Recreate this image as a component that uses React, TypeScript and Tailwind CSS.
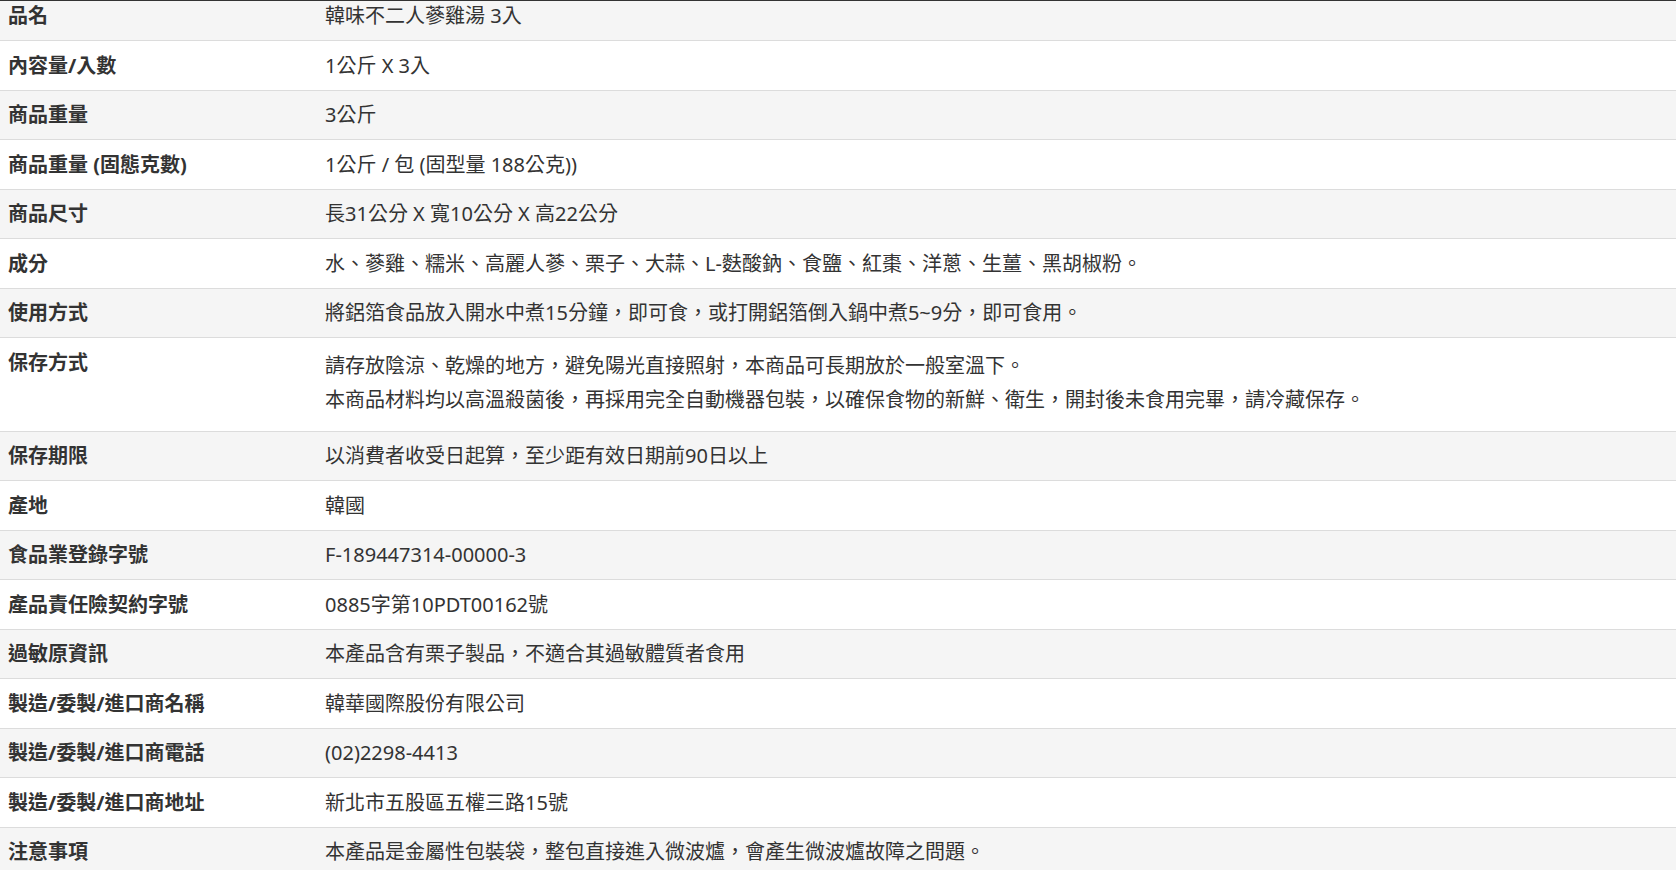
import React from "react";

type Row = { label: string; value: string[] };

const rows: Row[] = [
  { label: "品名", value: ["韓味不二人蔘雞湯 3入"] },
  { label: "內容量/入數", value: ["1公斤 X 3入"] },
  { label: "商品重量", value: ["3公斤"] },
  { label: "商品重量 (固態克數)", value: ["1公斤 / 包 (固型量 188公克))"] },
  { label: "商品尺寸", value: ["長31公分 X 寬10公分 X 高22公分"] },
  { label: "成分", value: ["水、蔘雞、糯米、高麗人蔘、栗子、大蒜、L-麩酸鈉、食鹽、紅棗、洋蔥、生薑、黑胡椒粉。"] },
  { label: "使用方式", value: ["將鋁箔食品放入開水中煮15分鐘，即可食，或打開鋁箔倒入鍋中煮5~9分，即可食用。"] },
  {
    label: "保存方式",
    value: [
      "請存放陰涼、乾燥的地方，避免陽光直接照射，本商品可長期放於一般室溫下。",
      "本商品材料均以高溫殺菌後，再採用完全自動機器包裝，以確保食物的新鮮、衛生，開封後未食用完畢，請冷藏保存。",
    ],
  },
  { label: "保存期限", value: ["以消費者收受日起算，至少距有效日期前90日以上"] },
  { label: "產地", value: ["韓國"] },
  { label: "食品業登錄字號", value: ["F-189447314-00000-3"] },
  { label: "產品責任險契約字號", value: ["0885字第10PDT00162號"] },
  { label: "過敏原資訊", value: ["本產品含有栗子製品，不適合其過敏體質者食用"] },
  { label: "製造/委製/進口商名稱", value: ["韓華國際股份有限公司"] },
  { label: "製造/委製/進口商電話", value: ["(02)2298-4413"] },
  { label: "製造/委製/進口商地址", value: ["新北市五股區五權三路15號"] },
  { label: "注意事項", value: ["本產品是金屬性包裝袋，整包直接進入微波爐，會產生微波爐故障之問題。"] },
];

export default function App() {
  return (
    <div
      className="w-full min-h-[870px] bg-white text-[#333] text-[20px] leading-[30px] border-t border-[#333] overflow-hidden"
      style={{ fontFamily: '"Noto Sans", "Noto Sans CJK TC", sans-serif' }}
    >
      {rows.map((r, i) => {
        const multi = r.value.length > 1;
        const first = i === 0;
        return (
          <div
            key={r.label}
            className={`flex border-b border-[#dcdcdc] ${i % 2 === 0 ? "bg-[#f5f5f5]" : "bg-white"}`}
          >
            <div
              className={`w-[317px] shrink-0 pl-2 pr-2 font-bold ${first ? "pt-0 pb-[9.25px]" : "py-[9.25px]"}`}
            >
              {r.label}
            </div>
            <div className={`flex-1 px-2 ${first ? "pt-0 pb-[9.25px]" : "py-[9.25px]"}`}>
              {multi ? (
                <>
                  <p className="mt-[3px]">{r.value[0]}</p>
                  <p className="mt-[4px] mb-[7px]">{r.value[1]}</p>
                </>
              ) : (
                <p>{r.value[0]}</p>
              )}
            </div>
          </div>
        );
      })}
    </div>
  );
}
